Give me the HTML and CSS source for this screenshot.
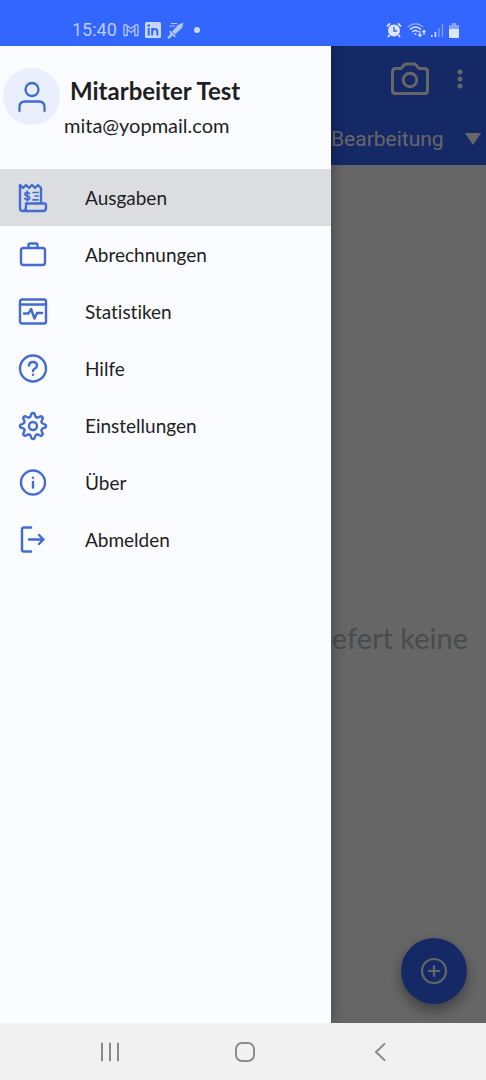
FILE: index.html
```html
<!DOCTYPE html>
<html lang="de">
<head>
<meta charset="utf-8">
<meta name="viewport" content="width=device-width, initial-scale=1">
<title>Ausgaben</title>
<link rel="stylesheet" href="styles.css">
</head>
<body>
<div class="screen">
  <header class="status">
    <div class="status-group">
      <time class="clock">15:40</time>
      <svg class="s-mail" width="16" height="14" viewBox="0 0 16 14" fill="none" stroke="currentColor" stroke-width="1.3" stroke-linejoin="round"><path d="M1 12.500V2.500Q1.500 1 3 1.800L8 5.600 13 1.800Q14.500 1 15 2.500V12.500H11.800V6.500L8 9.400 4.200 6.500V12.500Z"/><path d="M4.200 6.500V3M11.800 6.500V3"/></svg>
      <svg class="s-in" width="16" height="16" viewBox="0 0 16 16"><rect width="16" height="16" rx="1.500" fill="currentColor"/><g fill="none" stroke="#3366ff" stroke-width="2"><path d="M3.700 6V13.500M7.200 6V13.500M7.200 9.500Q7.500 7 9.800 7T12.300 9.500V13.500"/></g><circle cx="3.700" cy="3.600" r="1.300" fill="#3366ff"/></svg>
      <svg class="s-sword" width="17" height="17" viewBox="0 0 17 17" fill="currentColor"><path d="M16.500.500 15 6 8 12.500 5 9.500 11 3Z"/><path d="M3.200 8.500 9 14.200 7.800 15.200 5.500 13.400 2 17 .300 15.300 3.600 11.800 2.200 9.800Z"/><path d="M4 1.500H10M2.500 4H8" stroke="currentColor" stroke-width="1"/></svg>
      <span class="s-dot"></span>
    </div>
    <div class="status-group status-right">
      <svg width="16" height="16" viewBox="0 0 16 16"><circle cx="8" cy="8.500" r="6" fill="currentColor"/><path d="M1 4.500 4 1.300M15 4.500 12 1.300M3.500 13 2 15M12.500 13 14 15" stroke="currentColor" stroke-width="1.800"/><path d="M8 5V9H11" fill="none" stroke="#3366ff" stroke-width="1.400"/></svg>
      <svg width="19" height="16" viewBox="0 0 19 16" fill="none" stroke="currentColor" stroke-width="1.600"><path d="M1 5Q8.500-1.500 16 5" opacity=".5"/><path d="M3 7.500Q8.500 2.500 14 7.500M5.300 10Q8.500 7 11.500 10"/><circle cx="8.500" cy="12" r="1" fill="currentColor" stroke="none"/><path d="M13 9V14M11.300 12.500 13 14.300 14.500 12.500M17 13V8.500M15.500 10.200 17 8.500 18.500 10.200" stroke-width="1.200"/></svg>
      <svg width="13" height="15" viewBox="0 0 13 15" fill="currentColor"><path d="M0 12H1.600V14H0ZM3.600 9H5.200V14H3.600Z"/><path d="M7.200 5H8.600V14H7.200ZM10.800 1H12.200V14H10.800Z" opacity=".45"/></svg>
      <svg width="10" height="15" viewBox="0 0 10 15" fill="currentColor"><path d="M3 0H7V2H9Q10 2 10 3V6H0V3Q0 2 1 2H3Z" opacity=".5"/><path d="M0 6H10V14Q10 15 9 15H1Q0 15 0 14Z"/></svg>
    </div>
  </header>

  <div class="stage">
    <main class="app">
      <div class="appbar">
        <div class="actions">
          <button class="plain" aria-label="Kamera"><svg width="38" height="34" viewBox="0 0 38 34" fill="none" stroke="currentColor" stroke-width="3" stroke-linejoin="round"><path d="M4.500 6.500H10L13.500 2.500Q14 2 15 2H23Q24 2 24.500 2.500L28 6.500H33.500Q36.500 6.500 36.500 9.500V28.500Q36.500 31.500 33.500 31.500H4.500Q1.500 31.500 1.500 28.500V9.500Q1.500 6.500 4.500 6.500Z"/><circle cx="19" cy="18" r="6.800"/></svg></button>
          <button class="plain" aria-label="Mehr"><svg width="6" height="20" viewBox="0 0 6 20" fill="currentColor"><circle cx="3" cy="3" r="2.500"/><circle cx="3" cy="10" r="2.500"/><circle cx="3" cy="17" r="2.500"/></svg></button>
        </div>
        <div class="filter">
          <select class="filter-select" aria-label="Status"><option>Bearbeitung</option></select>
          <svg width="16" height="12" viewBox="0 0 16 12" fill="currentColor"><path d="M0 0H16L8 12Z"/></svg>
        </div>
      </div>
      <div class="empty"><p class="empty-text">efert keine</p></div>
      <button class="fab" aria-label="Hinzufügen"><svg width="28" height="28" viewBox="0 0 28 28" fill="none" stroke="currentColor" stroke-width="2.200" stroke-linecap="round"><circle cx="14" cy="14" r="12"/><path d="M14 9V19M9 14H19"/></svg></button>
    </main>
    <div class="scrim"></div>
    <aside class="drawer">
      <div class="profile">
        <div class="avatar"><svg width="28" height="32" viewBox="0 0 28 32" fill="none" stroke="currentColor" stroke-width="2.300" stroke-linecap="round"><circle cx="14" cy="8.500" r="6.500"/><path d="M1.500 30V26Q1.500 20.500 7 20.500H21Q26.500 20.500 26.500 26V30"/></svg></div>
        <div class="who">
          <h1 class="name">Mitarbeiter Test</h1>
          <p class="email">mita@yopmail.com</p>
        </div>
      </div>
      <nav class="menu">
        <a class="item active" href="#ausgaben"><svg class="icon" viewBox="0 0 30 30"><path d="M2 2 5 5 8 2 11 5 14 2 17 5 20 2 23 5V20.500H26.500Q28 20.500 28 22V25Q28 28 25 28H5Q2 28 2 25V2M23 20.500H8V24Q8 28 5 28"/><path d="M11.500 10.500Q10.500 9.300 9 9.300 7 9.300 7 11T9.300 13Q11.700 13.300 11.700 15T9.300 16.700Q7.700 16.700 6.700 15.500M9.300 8V18M15 9.500H20M17 13H20M15 16.800H20" stroke-width="1.700"/></svg><span>Ausgaben</span></a>
        <a class="item" href="#abrechnungen"><svg class="icon" viewBox="0 0 30 30"><rect x="3" y="8" width="24" height="17" rx="2.500"/><path d="M10.500 8V5Q10.500 3.500 12 3.500H18Q19.500 3.500 19.500 5V8"/></svg><span>Abrechnungen</span></a>
        <a class="item" href="#statistiken"><svg class="icon" viewBox="0 0 30 30"><rect x="2" y="2.500" width="26" height="24" rx="2"/><path d="M2 7.500H28M6 16.500H10.500L13 12 16.500 21.500 19 16H24"/></svg><span>Statistiken</span></a>
        <a class="item" href="#hilfe"><svg class="icon" viewBox="0 0 30 30"><circle cx="15" cy="14.500" r="13"/><path d="M11 11.500Q11.200 8 15 8T19 11.500Q19 13.500 17 14.500 15 15.500 15 17M15 20.700V20.800"/></svg><span>Hilfe</span></a>
        <a class="item" href="#einstellungen"><svg class="icon" viewBox="-15 -15 30 30">
          <defs><path id="tooth" d="M-3.600-8.700Q-2.200-9.300-1.900-11-1.700-13 0-13 1.700-13 1.900-11 2.200-9.300 3.600-8.700"/></defs>
          <use href="#tooth"/><use href="#tooth" transform="rotate(45)"/><use href="#tooth" transform="rotate(90)"/><use href="#tooth" transform="rotate(135)"/><use href="#tooth" transform="rotate(180)"/><use href="#tooth" transform="rotate(225)"/><use href="#tooth" transform="rotate(270)"/><use href="#tooth" transform="rotate(315)"/>
          <circle r="4"/></svg><span>Einstellungen</span></a>
        <a class="item" href="#ueber"><svg class="icon" viewBox="0 0 30 30"><circle cx="15" cy="14.500" r="12"/><path d="M15 14V19.500M15 9.600V9.700"/></svg><span>Über</span></a>
        <a class="item" href="#abmelden"><svg class="icon" viewBox="0 0 30 30"><path d="M13 2.500H6Q4 2.500 4 4.500V24.500Q4 26.500 6 26.500H13M11 14.500H25.500M21 10 25.500 14.500 21 19"/></svg><span>Abmelden</span></a>
      </nav>
    </aside>
  </div>

  <footer class="sysnav">
    <button class="sysbtn" aria-label="Letzte Apps"><svg width="20" height="20" viewBox="0 0 20 20"><path d="M2 1.500V18.500M10 1.500V18.500M18 1.500V18.500"/></svg></button>
    <button class="sysbtn" aria-label="Startseite"><svg width="20" height="20" viewBox="0 0 20 20"><rect x="1" y="1" width="18" height="18" rx="6"/></svg></button>
    <button class="sysbtn" aria-label="Zurück"><svg width="20" height="20" viewBox="0 0 20 20"><path d="M14.500 2 6 10 14.500 18"/></svg></button>
  </footer>
</div>
</body>
</html>
```
FILE: styles.css
```css
* { box-sizing: border-box; }
body {
  margin: 0;
  font-family: Lato, "Noto Sans", sans-serif;
  font-variant-ligatures: none;
  color: #1e1f23;
  background: #fbfcff;
}
h1, p { margin: 0; }
svg { display: block; flex: none; }
button { border: 0; padding: 0; background: none; color: inherit; font: inherit; }

.screen { display: flex; flex-direction: column; min-height: 100vh; }

.status {
  display: flex;
  justify-content: space-between;
  height: 46px;
  padding: 14px 27px 0 72px;
  background: #3366ff;
  color: #c9d8ff;
}
.status-group { display: flex; align-items: center; gap: 6px; height: 32px; }
.clock { font: 18px/32px Roboto, sans-serif; color: #b9ccff; }
.s-mail, .s-sword { opacity: .85; }
.s-dot { width: 6px; height: 6px; margin-left: 4px; border-radius: 50%; background: currentColor; }
.status-right { gap: 5px; color: #dce5ff; }

.stage { position: relative; display: flex; flex: 1; }
.app { display: flex; flex: 1; flex-direction: column; background: #fff; }
.appbar { padding: 16px 5px 8px 0; background: #3366ff; color: #fff; }
.actions { display: flex; justify-content: flex-end; align-items: center; gap: 28px; height: 34px; padding-right: 18px; }
.plain { display: block; }
.filter { display: flex; justify-content: flex-end; align-items: center; gap: 21px; height: 61px; padding-top: 24px; }
.filter-select {
  appearance: none;
  border: 0;
  padding: 0;
  background: none;
  color: inherit;
  font: 21px/32px Roboto, sans-serif;
}
.empty { display: flex; flex: 1; justify-content: flex-end; align-items: center; padding: 88px 18px 0 0; }
.empty-text { font-size: 29px; line-height: 36px; color: #b8bbbe; }
.fab {
  position: absolute;
  right: 19px;
  bottom: 19px;
  display: grid;
  place-items: center;
  width: 66px;
  height: 66px;
  border-radius: 50%;
  background: #3366ff;
  color: #fff;
  box-shadow: 0 6px 14px rgba(0, 0, 0, .4);
}
.scrim { position: absolute; inset: 0; background: rgba(0, 0, 0, .6); }

.drawer {
  position: absolute;
  top: 0;
  bottom: 0;
  left: 0;
  width: 331px;
  max-width: 85%;
  background: #fbfcff;
  box-shadow: 0 0 14px rgba(0, 0, 0, .35);
  clip-path: inset(0 -20px 0 0);
}
.profile { display: flex; gap: 4px; height: 123px; padding: 22px 3px 0; }
.avatar {
  display: grid;
  flex: none;
  place-items: center;
  width: 57px;
  height: 57px;
  border-radius: 50%;
  background: #e9effd;
  color: #426bd3;
}
.who { padding-top: 7px; }
.name { padding-left: 6px; font-size: 24px; line-height: 32px; font-weight: 700; }
.email { padding-top: 6px; font-size: 20px; line-height: 24px; }

.menu { display: flex; flex-direction: column; }
.item {
  display: flex;
  align-items: center;
  gap: 37px;
  height: 57px;
  padding-left: 18px;
  color: inherit;
  font-size: 19px;
  line-height: 24px;
  text-decoration: none;
}
.active { background: #dcdde1; }
.icon {
  width: 30px;
  height: 30px;
  fill: none;
  stroke: #426bd3;
  stroke-width: 2.4;
  stroke-linecap: round;
  stroke-linejoin: round;
}

.sysnav { display: flex; height: 57px; padding: 0 38px 0 42px; background: #f1f1f1; }
.sysbtn { display: grid; flex: 1; place-items: center; }
.sysbtn svg { fill: none; stroke: #8b8b8b; stroke-width: 2; stroke-linecap: round; }
```
